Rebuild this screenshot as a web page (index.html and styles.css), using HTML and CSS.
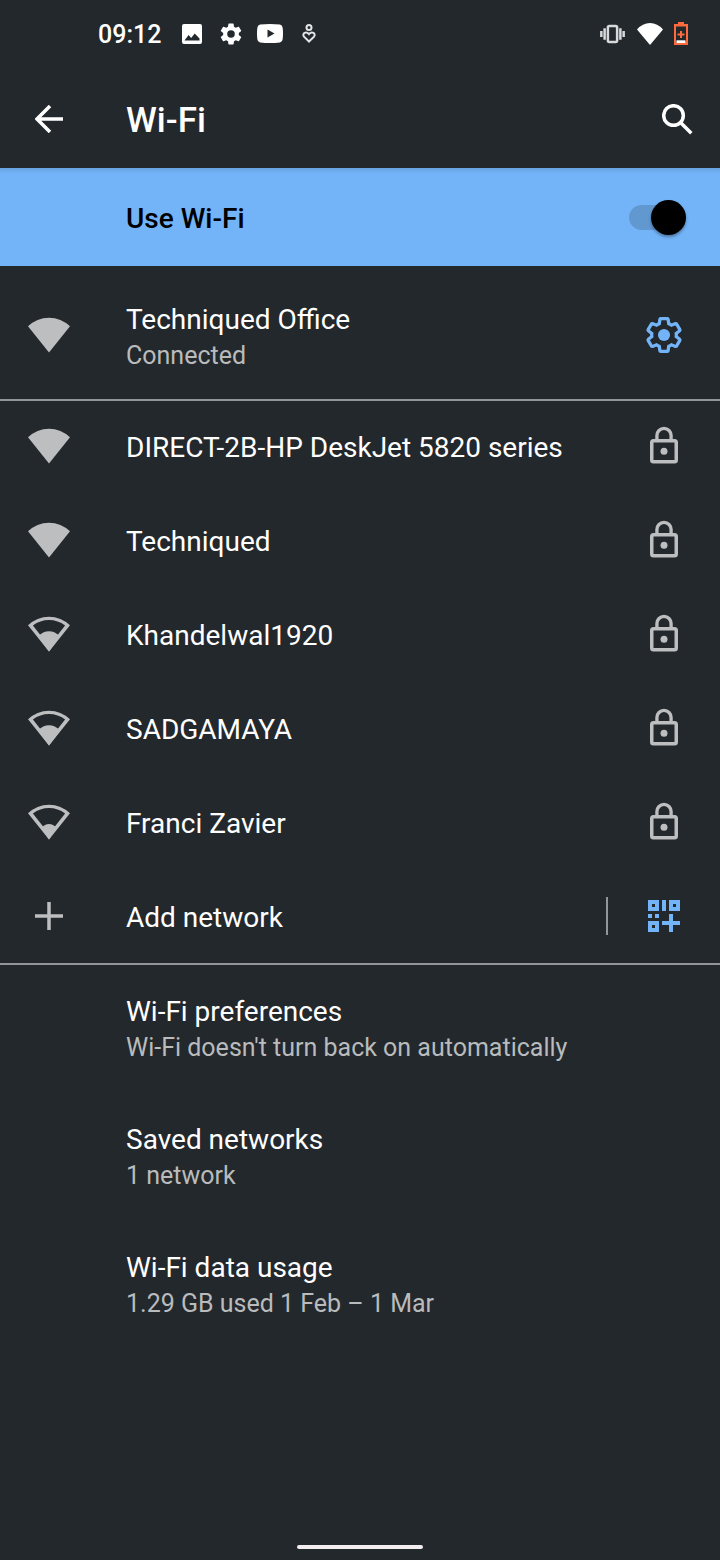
FILE: index.html
```html
<!DOCTYPE html>
<html lang="en">
<head>
<meta charset="utf-8">
<meta name="viewport" content="width=device-width, initial-scale=1">
<title>Wi-Fi</title>
<link rel="stylesheet" href="styles.css">
</head>
<body>
<svg class="defs" aria-hidden="true">
  <symbol id="gear" viewBox="0 0 24 24" overflow="visible"><path d="M19.43 12.98c.04-.32.07-.64.07-.98 0-.34-.03-.66-.07-.98l2.11-1.65c.19-.15.24-.42.12-.64l-2-3.46c-.09-.16-.26-.25-.44-.25-.06 0-.12.01-.17.03l-2.49 1c-.52-.4-1.08-.73-1.69-.98l-.38-2.65C14.46 2.18 14.25 2 14 2h-4c-.25 0-.46.18-.49.42l-.38 2.65c-.61.25-1.17.59-1.69.98l-2.49-1c-.06-.02-.12-.03-.18-.03-.17 0-.34.09-.43.25l-2 3.46c-.13.22-.07.49.12.64l2.11 1.65c-.04.32-.07.65-.07.98 0 .33.03.66.07.98l-2.11 1.65c-.19.15-.24.42-.12.64l2 3.46c.09.16.26.25.44.25.06 0 .12-.01.17-.03l2.49-1c.52.4 1.08.73 1.69.98l.38 2.65c.03.24.24.42.49.42h4c.25 0 .46-.18.49-.42l.38-2.65c.61-.25 1.17-.59 1.69-.98l2.49 1c.06.02.12.03.18.03.17 0 .34-.09.43-.25l2-3.46c.12-.22.07-.49-.12-.64l-2.11-1.65z"/></symbol>
  <symbol id="wifi-full" viewBox="0 0 24 24"><path d="M12 22 0 7A17.1 17.1 0 0 1 24 7z"/></symbol>
  <symbol id="wifi-outline" viewBox="0 0 24 24"><path fill-rule="evenodd" d="M12 22 0 7A17.1 17.1 0 0 1 24 7zM12 18.800 21.200 7.200A15 15 0 0 0 2.800 7.200z"/></symbol>
  <symbol id="wifi-mid" viewBox="0 0 24 24"><use href="#wifi-outline"/><path d="M12 22 5.600 13.400Q8.600 10.400 12 10.400T18.400 13.400z"/></symbol>
  <symbol id="wifi-low" viewBox="0 0 24 24"><use href="#wifi-outline"/><path d="M12 22 7.600 15.600Q9.600 13.200 12 13.200T16.400 15.600z"/></symbol>
  <symbol id="lock" viewBox="0 0 24 24"><path fill-rule="evenodd" d="M18 8h-1V6A5 5 0 0 0 7 6v2H6a2 2 0 0 0-2 2v10a2 2 0 0 0 2 2h12a2 2 0 0 0 2-2V10a2 2 0 0 0-2-2zM8.900 6a3.100 3.100 0 0 1 6.200 0v2H8.900zM18 20H6V10h12z"/><circle cx="12" cy="15" r="2"/></symbol>
</svg>

<div class="screen">
  <div class="status">
    <time class="clock">09:12</time>
    <svg class="s-icon photo" viewBox="0 0 20 20"><path fill-rule="evenodd" d="M2 0h16a2 2 0 0 1 2 2v16a2 2 0 0 1-2 2H2a2 2 0 0 1-2-2V2a2 2 0 0 1 2-2zM2.500 16.500h15V14.500L12.700 9.500 9.200 14 6.600 11z"/></svg>
    <svg class="s-icon cog" viewBox="1.500 1.500 21 21"><use href="#gear" width="24" height="24"/><circle class="hole" cx="12" cy="12" r="3.600"/></svg>
    <svg class="s-icon video" viewBox="0 0 26 19"><path fill-rule="evenodd" d="M3 .5Q13-.5 23 .5 25.500 1 25.700 4 26.300 9.500 25.700 15 25.500 18 23 18.500 13 19.500 3 18.500.5 18 .3 15-.3 9.500.3 4 .5 1 3 .5zM10.500 5.500v8L17.500 9.500z"/></svg>
    <svg class="s-icon heart" viewBox="0 0 14 19"><circle cx="7" cy="3.500" r="2.500"/><path d="M7 17.500 2 12.700C-.3 9.500 4 6.700 7 10.200 10 6.700 14.300 9.500 12 12.700z"/></svg>
    <span class="spacer"></span>
    <svg class="s-icon vibrate" viewBox="0 0 26 20"><rect x="8.200" y="1.800" width="9.600" height="16.400" rx="1.500"/><path d="M4.800 4v12M21.200 4v12M1.400 7v6M24.600 7v6"/></svg>
    <svg class="s-icon signal" viewBox="0 0 26 22"><path d="M13 22 0 6.500Q5.500 0 13 0T26 6.500z"/></svg>
    <svg class="s-icon battery" viewBox="0 0 14 23"><path fill-rule="evenodd" d="M4 0h6v2h4v21H0V2h4zM2 4.500v16h10v-16z"/><path d="M6 9h2v2.500h2.500v2H8V16H6v-2.500H3.500v-2H6z"/><path class="level" d="M2.500 18.300h9v2.700h-9z"/></svg>
  </div>

  <header class="appbar">
    <button class="icon-btn back" aria-label="Back"><svg viewBox="0 0 28 28"><path d="M28 14H2M15 1 2 14 15 27"/></svg></button>
    <h1>Wi-Fi</h1>
    <button class="icon-btn search" aria-label="Search"><svg viewBox="0 0 31 31"><circle cx="11.500" cy="11.500" r="9.800"/><path d="M18.500 18.500 29.300 29.300"/></svg></button>
  </header>

  <label class="switchbar"><span>Use Wi-Fi</span><input class="switch" type="checkbox" role="switch" checked></label>

  <main>
    <section class="current">
      <div class="row tall">
        <svg class="lead"><use href="#wifi-full"/></svg>
        <div class="text"><div class="title">Techniqued Office</div><div class="sub">Connected</div></div>
        <button class="icon-btn" aria-label="Network details"><svg class="gear" viewBox="-0.8 -0.8 25.6 25.6"><use href="#gear" width="24" height="24"/><circle cx="12" cy="12" r="3.700"/></svg></button>
      </div>
    </section>

    <section class="ruled">
      <div class="row"><svg class="lead"><use href="#wifi-full"/></svg><div class="title">DIRECT-2B-HP DeskJet 5820 series</div><svg class="trail"><use href="#lock"/></svg></div>
      <div class="row"><svg class="lead"><use href="#wifi-full"/></svg><div class="title">Techniqued</div><svg class="trail"><use href="#lock"/></svg></div>
      <div class="row"><svg class="lead"><use href="#wifi-mid"/></svg><div class="title">Khandelwal1920</div><svg class="trail"><use href="#lock"/></svg></div>
      <div class="row"><svg class="lead"><use href="#wifi-mid"/></svg><div class="title">SADGAMAYA</div><svg class="trail"><use href="#lock"/></svg></div>
      <div class="row"><svg class="lead"><use href="#wifi-low"/></svg><div class="title">Franci Zavier</div><svg class="trail"><use href="#lock"/></svg></div>
      <div class="row">
        <svg class="lead plus" viewBox="0 0 42 42"><path d="M7 21h28M21 7v28"/></svg>
        <div class="title">Add network</div>
        <button class="icon-btn scan" aria-label="Scan QR code"><svg class="qr" viewBox="0 0 32 32"><path fill-rule="evenodd" d="M0 0h11v11H0zM4 4v3h3V4zM14 0h4v11h-4zM21 0h11v11H21zM25 4v3h3V4zM0 14h4v4H0zM7 14h4v4H7zM0 21h11v11H0zM4 25v3h3v-3zM21 14h4v7h7v4h-7v7h-4v-7h-7v-4h7z"/></svg></button>
      </div>
    </section>

    <section class="ruled">
      <div class="row tall"><div class="text"><div class="title">Wi-Fi preferences</div><div class="sub">Wi-Fi doesn't turn back on automatically</div></div></div>
      <div class="row tall"><div class="text"><div class="title">Saved networks</div><div class="sub">1 network</div></div></div>
      <div class="row tall"><div class="text"><div class="title">Wi-Fi data usage</div><div class="sub">1.29 GB used 1 Feb – 1 Mar</div></div></div>
    </section>
  </main>

  <div class="home"></div>
</div>
</body>
</html>
```
FILE: styles.css
```css
* { box-sizing: border-box; }
body {
  margin: 0;
  background: #23282c;
  color: #fff;
  font-family: Roboto, "Liberation Sans", sans-serif;
}
button {
  padding: 0;
  border: 0;
  background: none;
  color: inherit;
  font: inherit;
}
svg { display: block; flex: none; fill: currentColor; }
.defs { position: absolute; width: 0; height: 0; }

.screen {
  display: flex;
  flex-direction: column;
  min-height: 100vh;
}

/* Status bar */
.status {
  display: flex;
  align-items: center;
  height: 70px;
  padding: 0 32px 3px 98px;
}
.clock { font-size: 25px; font-weight: 500; margin-right: 21px; padding-top: 2px; }
.photo { width: 20px; height: 20px; }
.cog { width: 22px; height: 22px; margin-left: 18px; }
.cog .hole { fill: #23282c; }
.video { width: 26px; height: 19px; margin-left: 15px; }
.heart {
  width: 14px;
  height: 19px;
  margin-left: 19px;
  fill: none;
  stroke: #e4e5e6;
  stroke-width: 2;
}
.spacer { flex: 1; }
.vibrate { width: 25px; height: 20px; fill: none; stroke: #d8d9da; stroke-width: 2.600; }
.signal { width: 26px; height: 22px; margin-left: 12px; }
.battery { width: 14px; height: 23px; margin-left: 11px; color: #ff6b3d; }
.battery .level { fill: #fff; }

/* App bar */
.appbar {
  display: flex;
  align-items: center;
  height: 98px;
  padding: 0 27px 0 35px;
}
.appbar h1 {
  flex: 1;
  margin: 0 0 0 63px;
  padding-top: 4px;
  font-size: 35px;
  font-weight: 500;
  line-height: 42px;
}
.appbar svg { fill: none; stroke: currentColor; stroke-width: 3.500; }
.back svg { width: 28px; height: 28px; }
.search svg { width: 31px; height: 31px; }

/* Master switch */
.switchbar {
  display: flex;
  align-items: center;
  justify-content: space-between;
  height: 98px;
  padding: 0 34px 0 126px;
  background: linear-gradient(#68a4e3, #73b3f7 6px);
  color: #000;
  font-size: 28px;
  font-weight: 500;
}
.switchbar span { padding-top: 2px; }
.switch {
  appearance: none;
  display: flex;
  align-items: center;
  justify-content: flex-end;
  width: 57px;
  height: 25px;
  margin: 0;
  border-radius: 13px;
  background: linear-gradient(90deg, #6298d0 40px, transparent 40px);
}
.switch::before {
  content: "";
  flex: none;
  width: 35px;
  height: 35px;
  border-radius: 50%;
  background: #000;
  box-shadow: 0 2px 3px rgba(0, 0, 0, .35);
}

/* Lists */
main { flex: 1; }
.current { padding-top: 5px; }
.ruled { box-shadow: inset 0 2px #929698; }
.row {
  display: grid;
  grid-template-columns: 98px 1fr auto;
  align-items: center;
  min-height: 94px;
  padding: 0 35px 0 28px;
}
.row.tall { min-height: 128px; }
.row > .title, .row > .text { grid-column: 2; }
.title { font-size: 28px; line-height: 36px; }
.row > .title { padding-top: 4px; }
.text { padding-top: 6px; }
.sub { font-size: 25px; line-height: 36px; color: #b9bbbc; }
.lead, .trail { width: 42px; height: 42px; color: #bdbec0; }
.plus { fill: none; stroke: currentColor; stroke-width: 3.500; }
.row .icon-btn { color: #73b3f7; }
.gear {
  width: 42px;
  height: 42px;
}
.gear use { fill: none; stroke: currentColor; stroke-width: 2; }
.scan { padding: 3px 5px 3px 40px; border-left: 2px solid #929698; }
.qr { width: 32px; height: 32px; }

.home {
  align-self: center;
  width: 126px;
  height: 4px;
  margin-bottom: 11px;
  border-radius: 2px;
  background: #f2eef0;
}
```
